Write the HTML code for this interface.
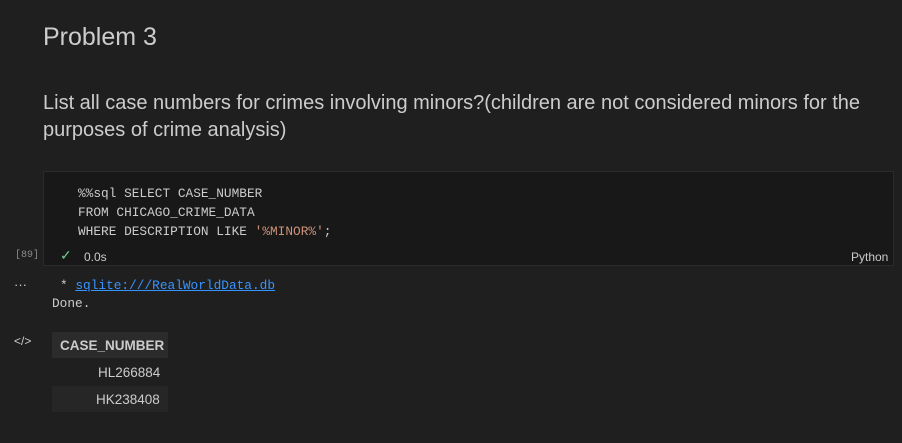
<!DOCTYPE html>
<html><head><style>
body{margin:0;width:902px;height:443px;background:#1f1f1f;font-family:"Liberation Sans",sans-serif;color:#ccc;position:relative;overflow:hidden}
.a{position:absolute;white-space:nowrap}
.m{font-family:"Liberation Mono",monospace;font-size:12.8px}
</style></head><body>
<div class="a" style="left:43px;top:23px;font-size:25px;color:#cccccc">Problem 3</div>
<div class="a" style="left:43px;top:90px;font-size:20px;line-height:27px;color:#cccccc;white-space:normal;width:840px">List all case numbers for crimes involving minors?(children are not considered minors for the purposes of crime analysis)</div>
<div class="a" style="left:43px;top:171px;width:851px;height:95px;background:#181818;border:1px solid #2b2b2b;box-sizing:border-box"></div>
<div class="a m" style="left:78px;top:184px;line-height:19px;color:#cccccc">%%sql SELECT CASE_NUMBER<br>FROM CHICAGO_CRIME_DATA<br>WHERE DESCRIPTION LIKE <span style="color:#ce9178">'%MINOR%'</span>;</div>
<div class="a m" style="left:15px;top:250px;font-size:10px;color:#8a8a8a">[89]</div>
<div class="a" style="left:60px;top:247px;color:#73c991;font-size:14px">✓</div>
<div class="a" style="left:84px;top:250px;font-size:12px;color:#ccc">0.0s</div>
<div class="a" style="left:851px;top:250px;font-size:12px;color:#ccc">Python</div>
<div class="a" style="left:14px;top:277px;font-size:13px;color:#ccc">···</div>
<div class="a m" style="left:60px;top:278px;color:#ccc">* <span style="color:#3794ff;text-decoration:underline">sqlite:///RealWorldData.db</span></div>
<div class="a m" style="left:52px;top:296px;color:#ccc">Done.</div>
<div class="a" style="left:14px;top:334px;font-size:12px;color:#ccc">&lt;/&gt;</div>
<div class="a" style="left:52px;top:332px;width:116px;height:26px;background:#2b2b2b"></div>
<div class="a" style="left:60px;top:338px;font-size:13.5px;font-weight:bold;color:#ccc">CASE_NUMBER</div>
<div class="a" style="left:98px;top:365px;font-size:13.5px;color:#ccc">HL266884</div>
<div class="a" style="left:52px;top:386px;width:116px;height:26px;background:#262626"></div>
<div class="a" style="left:96px;top:392px;font-size:13.5px;color:#ccc">HK238408</div>
</body></html>
